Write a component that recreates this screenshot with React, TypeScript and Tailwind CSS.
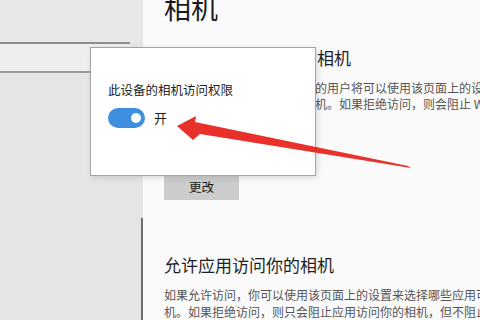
import React from "react";

const font = { fontFamily: '"Noto Sans CJK SC", "Noto Sans", sans-serif' };

export default function App() {
  return (
    <div
      className="relative flex w-[480px] h-[320px] overflow-hidden bg-[#fafafa]"
      style={font}
    >
      {/* Sidebar */}
      <div className="flex w-[143px] shrink-0 flex-col bg-[#e5e5e5]">
        <div className="h-[42px] bg-[#e8e8e8]" />
        <div className="h-[2px] w-[130px] bg-[#8e8e8e]" />
        <div className="h-[27px] w-[130px] bg-[#eeeeee]" />
        <div className="h-[2px] w-[130px] bg-[#9a9a9a]" />
        <div className="flex flex-1 justify-end">
          <div className="mt-[145px] w-[2px] bg-[#6e6e6e]" />
        </div>
      </div>

      {/* Content */}
      <div className="flex min-w-0 flex-1 flex-col overflow-hidden whitespace-nowrap pl-[21px]">
        <div className="mt-[-6px] h-[28px] text-[27px] leading-[28px] text-[#1a1a1a]">
          相机
        </div>
        <div className="mt-[26px] h-[20px] text-[17px] leading-[20px] text-[#1f1f1f]">
          允许访问该设备上的相机
        </div>
        <div className="mt-[12px] pl-[7px] text-[12px] leading-[16px] text-[#555]">
          <div>如果允许访问，使用此设备的用户将可以使用该页面上的设置选择</div>
          <div>选择其应用是否可以访问相机。如果拒绝访问，则会阻止 Windows 功能</div>
        </div>
        <div className="mt-[63px] flex h-[31px] w-[75px] items-center justify-center bg-[#cccccc] text-[12.5px] text-[#1a1a1a]">
          更改
        </div>
        <div className="mt-[55px] h-[20px] text-[17px] leading-[20px] text-[#1f1f1f]">
          允许应用访问你的相机
        </div>
        <div className="mt-[11px] text-[12px] leading-[17px] text-[#555]">
          <div>如果允许访问，你可以使用该页面上的设置来选择哪些应用可以访问你的相</div>
          <div>机。如果拒绝访问，则只会阻止应用访问你的相机，但不阻止 Windows</div>
        </div>
      </div>

      {/* Popup */}
      <div className="absolute left-[90px] top-[47px] flex h-[129px] w-[226px] flex-col border border-[#a3a3a3] bg-white pl-[17px] pt-[33px] shadow-[2px_2px_6px_rgba(0,0,0,0.12)]">
        <div className="text-[12.5px] leading-[18px] text-[#222]">此设备的相机访问权限</div>
        <div className="mt-[9px] flex items-center gap-[9px]">
          <div className="flex h-[20px] w-[37px] items-center justify-end rounded-full bg-[#3f8fe0] pr-[4px]">
            <div className="h-[10px] w-[10px] rounded-full bg-white" />
          </div>
          <div className="text-[13px] leading-[18px] text-[#222]">开</div>
        </div>
      </div>

      {/* Red arrow */}
      <svg
        className="pointer-events-none absolute left-0 top-0"
        width="480"
        height="320"
        viewBox="0 0 480 320"
      >
        <polygon
          points="177,126 196,116 195,122 408,166 411,168 200,134 193,140"
          fill="#e8312b"
        />
      </svg>
    </div>
  );
}
